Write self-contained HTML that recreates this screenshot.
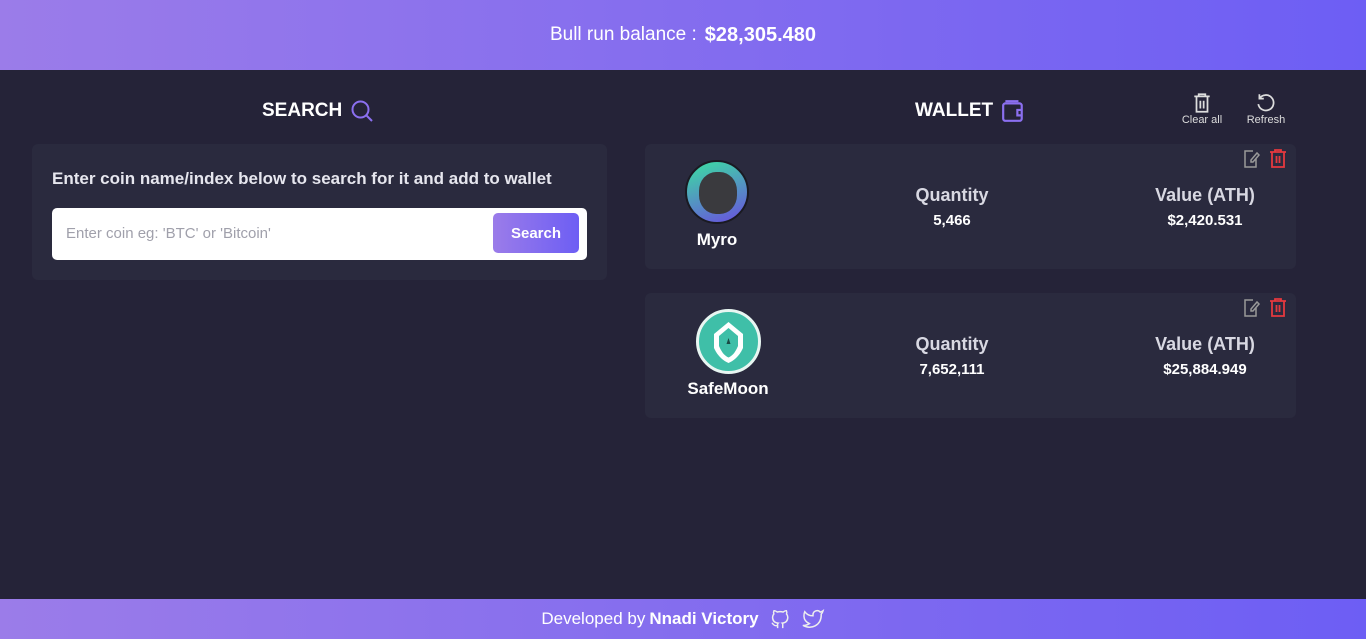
<!DOCTYPE html>
<html><head><meta charset="utf-8"><style>
*{margin:0;padding:0;box-sizing:border-box}
body{width:1366px;height:639px;background:#252338;font-family:"Liberation Sans",sans-serif;color:#fff;position:relative;overflow:hidden}
.hdr{height:70px;background:linear-gradient(90deg,#9b7ce9,#6d5ef4);display:flex;align-items:center;justify-content:center;font-size:19px}
.hdr b{margin-left:8px;font-size:20px}
.ftr{position:absolute;left:0;top:599px;width:1366px;height:40px;background:linear-gradient(90deg,#9b7ce9,#6d5ef4);display:flex;align-items:center;justify-content:center;font-size:17px;gap:4px}
.title{position:absolute;font-weight:bold;font-size:19px;display:flex;align-items:center;gap:8px}
.card{position:absolute;background:#2a2a3e;border-radius:6px}
.lbl{position:absolute;font-weight:bold;text-align:center}
.small{position:absolute;font-size:11px;color:#ddd;text-align:center}
</style></head><body>
<div class="hdr">Bull run balance : <b>$28,305.480</b></div>

<div class="title" style="left:262px;top:99px">SEARCH
<svg width="24" height="24" viewBox="0 0 24 24" fill="none" stroke="#8b6ff0" stroke-width="2"><circle cx="10.5" cy="10.5" r="8"/><path d="M16.5 16.5L22 22"/></svg></div>
<div class="card" style="left:32px;top:144px;width:575px;height:136px">
<div style="position:absolute;left:20px;top:25px;font-size:17px;font-weight:bold;color:#e6e6ee">Enter coin name/index below to search for it and add to wallet</div>
<div style="position:absolute;left:20px;top:64px;width:535px;height:52px;background:#fff;border-radius:5px">
<div style="position:absolute;left:14px;top:17px;font-size:15px;color:#a0a0ab">Enter coin eg: 'BTC' or 'Bitcoin'</div>
<div style="position:absolute;left:441px;top:5px;width:86px;height:40px;border-radius:5px;background:linear-gradient(90deg,#9b7ce9,#6d5ef4);font-weight:bold;font-size:15px;display:flex;align-items:center;justify-content:center">Search</div>
</div></div>

<div class="title" style="left:915px;top:99px">WALLET
<svg width="24" height="24" viewBox="0 0 22 22" fill="none" stroke="#8b6ff0" stroke-width="2"><rect x="2" y="4" width="17" height="16" rx="2"/><path d="M4 2h12M19 10h-4v5h4"/></svg></div>
<svg style="position:absolute;left:1192px;top:92px" width="20" height="22" viewBox="0 0 18 20" fill="none" stroke="#ddd" stroke-width="1.6"><path d="M2 4h14M6 4V2h6v2M4 4v14h10V4M7.5 8v7M10.5 8v7"/></svg>
<div class="small" style="left:1178px;top:114px;width:48px">Clear all</div>
<svg style="position:absolute;left:1255px;top:92px" width="22" height="22" viewBox="0 0 20 20" fill="none" stroke="#ddd" stroke-width="1.6"><path d="M4 6a7 7 0 1 1-1 5M4 2v4h4"/></svg>
<div class="small" style="left:1242px;top:114px;width:48px">Refresh</div>

<div class="card" style="left:645px;top:144px;width:651px;height:125px">
<svg style="position:absolute;left:596px;top:5px" width="20" height="20" viewBox="0 0 20 20" fill="none" stroke="#999" stroke-width="1.5"><path d="M12 2H4v16h11V10M16 4l-6 7v2h2l6-7z"/></svg>
<svg style="position:absolute;left:623px;top:4px" width="20" height="20" viewBox="0 0 20 20" fill="none" stroke="#e5393e" stroke-width="1.8"><path d="M2 4h16M7 4V2h6v2M4 4v15h12V4M8.5 8v7M11.5 8v7"/></svg>
<div style="position:absolute;left:40px;top:16px;width:64px;height:64px;border-radius:50%;background:linear-gradient(160deg,#3ae0a0,#6a4ee0);border:2px solid #1a1a22;overflow:hidden"><div style="position:absolute;left:12px;top:10px;width:38px;height:42px;border-radius:45%;background:#3a3a3e"></div></div>
<div class="lbl" style="left:32px;top:86px;width:80px;font-size:17px">Myro</div>
<div class="lbl" style="left:247px;top:41px;width:120px;font-size:18px;color:#d8d8e2">Quantity</div>
<div class="lbl" style="left:247px;top:68px;width:120px;font-size:15px">5,466</div>
<div class="lbl" style="left:490px;top:41px;width:140px;font-size:18px;color:#d8d8e2">Value (ATH)</div>
<div class="lbl" style="left:490px;top:68px;width:140px;font-size:15px">$2,420.531</div>
</div>

<div class="card" style="left:645px;top:293px;width:651px;height:125px">
<svg style="position:absolute;left:596px;top:5px" width="20" height="20" viewBox="0 0 20 20" fill="none" stroke="#999" stroke-width="1.5"><path d="M12 2H4v16h11V10M16 4l-6 7v2h2l6-7z"/></svg>
<svg style="position:absolute;left:623px;top:4px" width="20" height="20" viewBox="0 0 20 20" fill="none" stroke="#e5393e" stroke-width="1.8"><path d="M2 4h16M7 4V2h6v2M4 4v15h12V4M8.5 8v7M11.5 8v7"/></svg>
<div style="position:absolute;left:51px;top:16px;width:65px;height:65px;border-radius:50%;background:#3fbfa8;border:3px solid #e8f6f2"><svg width="59" height="59" viewBox="0 0 59 59"><path d="M29.5 10L15 22v14c4 9 10 13 14.5 15 4.5-2 10.5-6 14.5-15V22z" fill="#fff"/><path d="M29.5 16L20 24v10c3 7 6 10 9.5 11.5 3.5-1.5 6.5-4.5 9.5-11.5V24z" fill="#3fbfa8"/><path d="M29.5 26l-2 6h4z" fill="#1a4a44"/></svg></div>
<div class="lbl" style="left:33px;top:86px;width:100px;font-size:17px">SafeMoon</div>
<div class="lbl" style="left:247px;top:41px;width:120px;font-size:18px;color:#d8d8e2">Quantity</div>
<div class="lbl" style="left:247px;top:68px;width:120px;font-size:15px">7,652,111</div>
<div class="lbl" style="left:490px;top:41px;width:140px;font-size:18px;color:#d8d8e2">Value (ATH)</div>
<div class="lbl" style="left:490px;top:68px;width:140px;font-size:15px">$25,884.949</div>
</div>

<div class="ftr">Developed by <b>Nnadi Victory</b>
<svg style="margin-left:6px" width="22" height="22" viewBox="0 0 24 24" fill="none" stroke="#eee" stroke-width="1.6"><path d="M9 19c-4 1.5-4-2-6-2.5M15 22v-3.5c0-1 .1-1.5-.5-2 3-.3 6-1.5 6-6.5a5 5 0 0 0-1.4-3.5 4.6 4.6 0 0 0-.1-3.5s-1.1-.3-3.6 1.4a12 12 0 0 0-6.4 0C6.5 2.7 5.4 3 5.4 3a4.6 4.6 0 0 0-.1 3.5A5 5 0 0 0 3.9 10c0 5 3 6.2 6 6.5-.6.5-.6 1.2-.5 2V22"/></svg>
<svg style="margin-left:6px" width="24" height="22" viewBox="0 0 24 24" fill="none" stroke="#eee" stroke-width="1.6"><path d="M23 3a10.9 10.9 0 0 1-3.1 1.5 4.5 4.5 0 0 0-7.9 3v1A10.7 10.7 0 0 1 3 4s-4 9 5 13a11.6 11.6 0 0 1-7 2c9 5 20 0 20-11.5 0-.3 0-.6-.1-.8A7.7 7.7 0 0 0 23 3z"/></svg>
</div>
</body></html>
